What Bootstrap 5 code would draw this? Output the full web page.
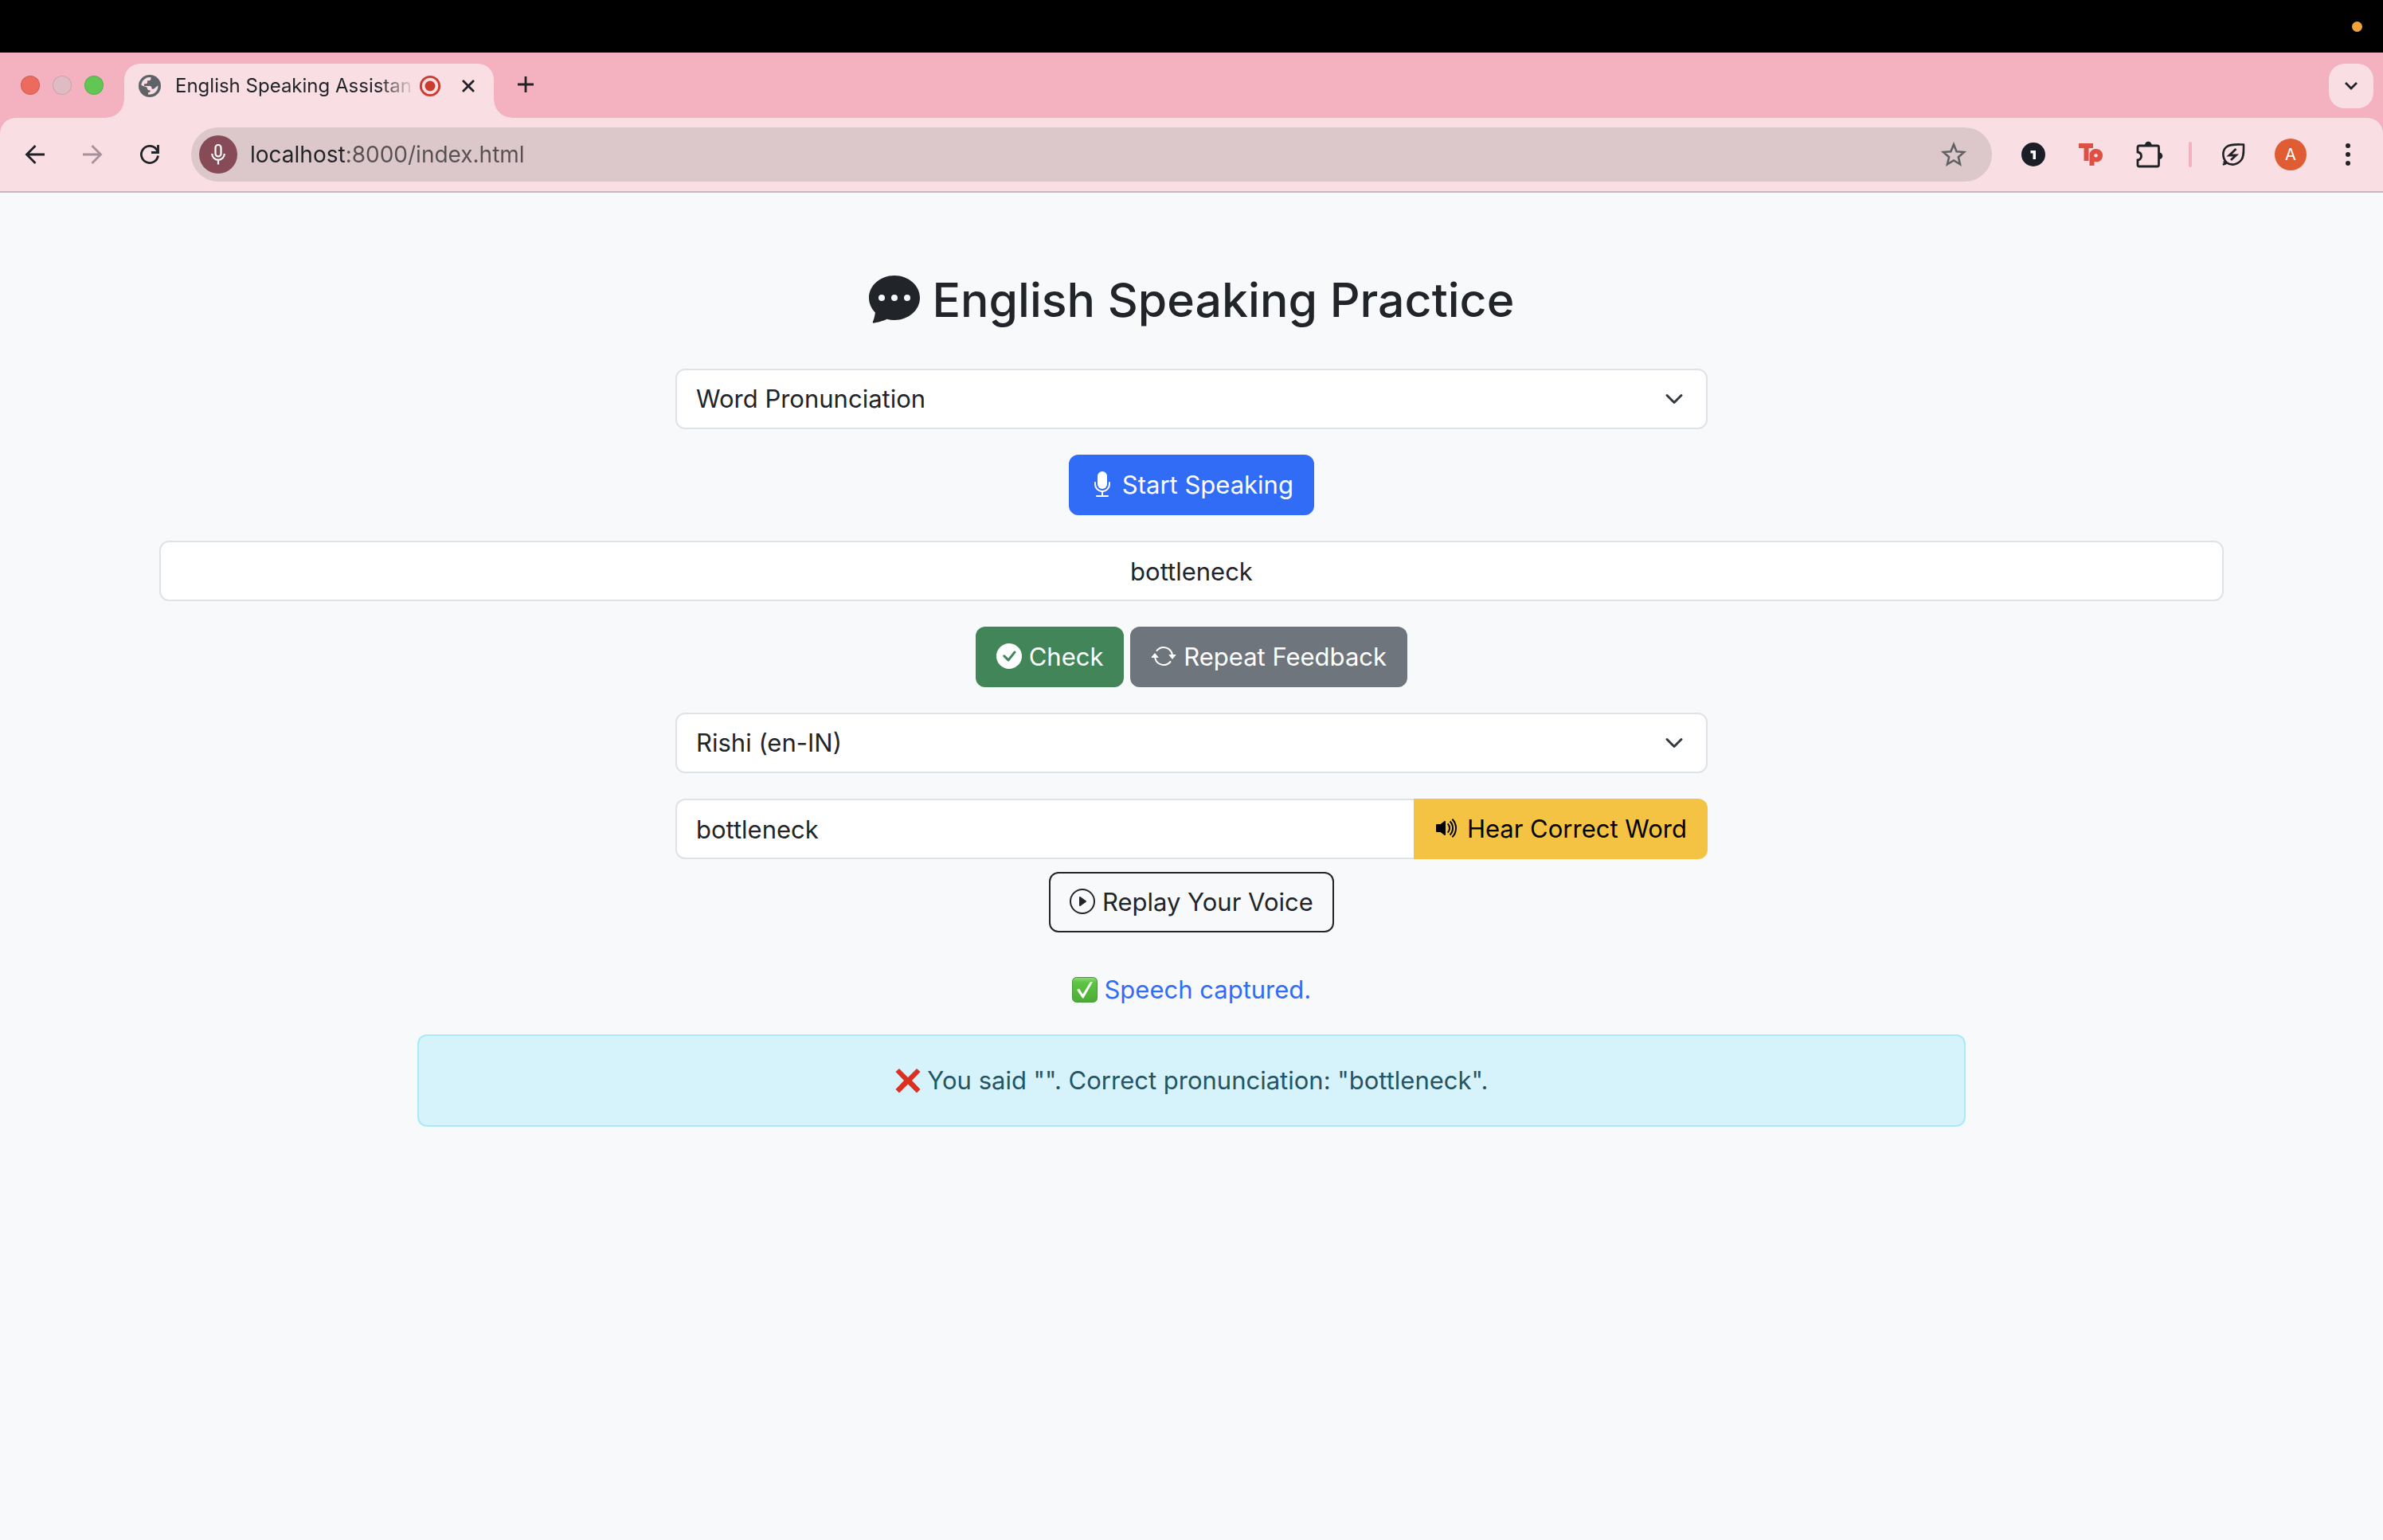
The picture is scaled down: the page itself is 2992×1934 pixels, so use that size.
<!DOCTYPE html>
<html lang="en">
<head>
<meta charset="utf-8">
<meta name="viewport" content="width=device-width, initial-scale=1">
<title>English Speaking Assistant</title>
<link href="https://cdn.jsdelivr.net/npm/bootstrap@5.3.0/dist/css/bootstrap.min.css" rel="stylesheet">
<style>
:root { font-size: 32px; --bs-border-width: 2px; --bs-border-radius: 12px; }
body { font-family: Inter, "Liberation Sans", sans-serif; background: #f8f9fb; color: #212529; font-size: 31px; line-height: 48px; min-height: 100vh; }
svg { display: block; flex: none; overflow: visible; }

/* system bar and browser chrome */
.menubar { height: 66px; background: #000; padding-right: 26px; }
.mic-dot { width: 13px; height: 13px; background: #f1a33c; }
.tabstrip { height: 82px; background: #f4b1bf; padding: 14px 12px 0 26px; }
.lights { gap: 16px; height: 54px; }
.lights span { width: 24px; height: 24px; border: 1px solid rgba(0,0,0,.12); }
.light-close { background: #ec6a5e; }
.light-min { background: #dfbcc4; }
.light-max { background: #62c655; }
.tab-now { position: relative; width: 464px; height: 68px; margin-left: 26px; padding: 0 24px 12px 18px; background: #f9dfe4; border-radius: 20px 20px 0 0; color: #1f2226; font-size: 24px; }
.tab-now::before, .tab-now::after { content: ""; position: absolute; bottom: 0; width: 22px; height: 22px; }
.tab-now::before { right: 100%; background: radial-gradient(circle at 0 0, #f4b1bf 21px, #f9dfe4 22px); }
.tab-now::after { left: 100%; background: radial-gradient(circle at 100% 0, #f4b1bf 21px, #f9dfe4 22px); }
.tab-name { margin: 0 8px 0 18px; -webkit-mask-image: linear-gradient(90deg, #000 86%, transparent 101%); mask-image: linear-gradient(90deg, #000 86%, transparent 101%); }
.tab-close { padding-left: 26px !important; }
.tab-add { height: 52px; margin-left: 30px; }
.bare { border: 0; background: none; padding: 0; color: #1f2226; display: flex; align-items: center; justify-content: center; }
.tab-menu { width: 56px; height: 56px; border-radius: 20px; background: #f9dfe4; }
.under { background: #f4b1bf; }
.toolbar { height: 94px; background: #f9dfe4; border-bottom: 2px solid #c9b4b9; border-radius: 20px 20px 0 0; padding: 0 40px 0 30px; }
.navs { gap: 44px; padding-right: 38px; }
.omnibox { height: 68px; border-radius: 34px; background: #dcc7ca; padding: 0 32px 0 10px; }
.mic-chip { width: 48px; height: 48px; background: #874b58; }
.address { border: 0; outline: 0; padding: 0; margin-left: 16px; min-width: 0; font-size: 28px; line-height: 48px; color: transparent; background: linear-gradient(90deg, #1f2226 122px, #575053 122px); -webkit-background-clip: text; background-clip: text; }
.extras { gap: 42px; margin-left: 37px; }
.extras-end { gap: 37px; margin-left: 32px; }
.sep { width: 4px; height: 32px; background: #f4b1bf; border-radius: 2px; }
.avatar { width: 40px; height: 40px; background: #e05d34; color: #fff; font-size: 20px; line-height: 40px; }
.dots { margin-left: 11px; }

/* practice page */
.practice { max-width: 2640px; padding: 96px 24px 0; }
.practice h2 { font-size: 59px; line-height: 77px; margin-bottom: 48px; }
.practice h2 .ico { width: 64px; height: 64px; vertical-align: -8px; }
.practice .form-select, .practice .form-control, .practice .btn { font-size: 31px; line-height: 48px; padding: 12px 24px; height: 76px; border-width: 2px; border-radius: 12px; }
.practice .form-select, .practice .form-control { border-color: #dfe2e7; color: #212529; }
.practice .form-select { background-size: 32px 24px; background-position: right 24px center; padding-right: 72px; }
.practice .input-group > .form-control { border-top-right-radius: 0; border-bottom-right-radius: 0; }
.practice .input-group > .btn { border-top-left-radius: 0; border-bottom-left-radius: 0; margin-left: -2px; }
.pair { gap: 8px; }
.ico { display: inline-block; fill: currentColor; vertical-align: -4px; }
.practice .btn .ico, .emo { width: 32px; height: 32px; }
.emo { display: inline-block; vertical-align: -5px; }
.btn-primary { --bs-btn-bg: #306cf5; --bs-btn-border-color: #306cf5; }
.btn-success { --bs-btn-bg: #428558; --bs-btn-border-color: #428558; }
.btn-secondary { --bs-btn-bg: #6f757d; --bs-btn-border-color: #6f757d; }
.btn-warning { --bs-btn-bg: #f5c344; --bs-btn-border-color: #f5c344; }
.status { color: #306cf5; }
.result { background: #d6f3fb; border: 2px solid #a9eaf6; color: #235564; padding: 32px; border-radius: 12px; }
</style>
</head>
<body>
<div class="menubar d-flex align-items-center justify-content-end"><span class="mic-dot rounded-circle"></span></div>

<header>
  <div class="tabstrip d-flex align-items-start">
    <div class="lights d-flex align-items-center">
      <span class="light-close rounded-circle"></span>
      <span class="light-min rounded-circle"></span>
      <span class="light-max rounded-circle"></span>
    </div>
    <div class="tab-now d-flex align-items-center">
      <svg width="28" height="28" viewBox="0 0 28 28"><circle cx="14" cy="14" r="14" fill="#5f6368"/><path fill="#f9dfe4" d="M15.500 3.200v1.600c0 1.500-1 2.400-2.500 2.400h-2v2.200c0 1.200-.8 1.800-2 1.800H7v2.900h7c1.500 0 2.500 1 2.500 2.500v1.200h1.300c2.700 0 3.200-2.600 6.700-4.300A10.900 10.900 0 0 1 12 24.700v-2.500c1.900 0 2.900-.9 2.900-2.700-3.400 0-4.200-1.300-4.200-3.700L3.300 13A10.900 10.900 0 0 1 15.500 3.200z"/></svg>
      <span class="tab-name flex-grow-1 text-nowrap">English Speaking Assistan</span>
      <svg width="28" height="28" viewBox="0 0 28 28"><circle cx="14" cy="14" r="11.700" fill="none" stroke="#c93c30" stroke-width="2.800"/><circle cx="14" cy="14" r="6.500" fill="#c93c30"/></svg>
      <button class="bare tab-close" aria-label="Close tab"><svg width="16" height="16" viewBox="0 0 16 16"><path d="M1 1l14 14M15 1L1 15" stroke="#1f2226" stroke-width="2.800"/></svg></button>
    </div>
    <button class="bare tab-add" aria-label="New tab"><svg width="20" height="20" viewBox="0 0 20 20"><path d="M10 0v20M0 10h20" stroke="#1f2226" stroke-width="2.800"/></svg></button>
    <button class="bare tab-menu ms-auto" aria-label="Search tabs"><svg width="16" height="10" viewBox="0 0 16 10"><path d="M1 1l7 7 7-7" fill="none" stroke="#1f2226" stroke-width="2.800"/></svg></button>
  </div>
  <div class="under">
  <div class="toolbar d-flex align-items-center">
    <div class="navs d-flex align-items-center">
      <button class="bare" aria-label="Back"><svg width="28" height="28" viewBox="0 0 28 28"><path d="M26 14H4M14.500 3L3.500 14l11 11" fill="none" stroke="#1f2226" stroke-width="2.800"/></svg></button>
      <button class="bare" aria-label="Forward"><svg width="28" height="28" viewBox="0 0 28 28"><path d="M2 14h22M13.500 3l11 11-11 11" fill="none" stroke="#a6929a" stroke-width="2.800"/></svg></button>
      <button class="bare" aria-label="Reload"><svg width="28" height="28" viewBox="0 0 28 28"><path d="M24.500 15.500A10.600 10.600 0 1 1 22 7l2 3" fill="none" stroke="#1f2226" stroke-width="2.800"/><path d="M24.500 2v9.500H16" fill="none" stroke="#1f2226" stroke-width="2.800"/></svg></button>
    </div>
    <div class="omnibox d-flex align-items-center flex-grow-1">
      <span class="mic-chip rounded-circle d-flex align-items-center justify-content-center"><svg width="18" height="26" viewBox="0 0 18 26"><rect x="5.500" y="1" width="7" height="14.500" rx="3.500" fill="none" stroke="#fff" stroke-width="2.200"/><path d="M1.200 12a7.800 7.800 0 0 0 15.600 0M9 20v5.500" fill="none" stroke="#fff" stroke-width="2.200"/></svg></span>
      <input class="address flex-grow-1" type="text" value="localhost:8000/index.html" aria-label="Address">
      <button class="bare" aria-label="Bookmark"><svg width="32" height="32" viewBox="0 0 32 32"><path d="M16 3.500l3.600 8.700 9.400.8-7.100 6.200 2.100 9.100-8-4.800-8 4.800 2.100-9.100L3 13l9.400-.8z" fill="none" stroke="#5f6264" stroke-width="2.600"/></svg></button>
    </div>
    <div class="extras d-flex align-items-center">
      <svg width="30" height="30" viewBox="0 0 30 30"><circle cx="15" cy="15" r="15" fill="#1b1e27"/><path d="M11.500 10h6.500v11h-3.500v-7.500h-3z" fill="#fff"/></svg>
      <svg width="30" height="30" viewBox="0 0 30 30"><g fill="#de4f44"><path d="M0 1h18v6h-5.500v16h-6V7H0z"/><path fill-rule="evenodd" d="M13.500 14.500C14.500 10.500 17.500 8 21.500 8 26.500 8 30 11.500 30 16s-3 8.500-7.500 8.500c-1 0-2-.2-3-.5v5h-6zM21.500 14a2.300 2.300 0 1 0 .1 0z"/></g></svg>
      <svg width="34" height="34" viewBox="0 0 34 34"><path d="M4 6h22.500a2 2 0 0 1 2 2v22a2 2 0 0 1-2 2H4a2 2 0 0 1-2-2v-6c6-1 6-9 0-10V8a2 2 0 0 1 2-2z" fill="none" stroke="#1f2226" stroke-width="2.800"/><path d="M11 5a4.300 4.300 0 0 1 8.600 0zM29 14.500a4.300 4.300 0 0 1 0 8.600z" fill="#1f2226"/></svg>
    </div>
    <div class="extras-end d-flex align-items-center">
      <span class="sep"></span>
      <svg width="30" height="30" viewBox="0 0 30 30"><path d="M6.500 25C1 19 1 10 6.500 5.500 12 1.500 20 2.500 28 2.500c0 8 .5 15.500-3 19.500-5 6-13 7.500-18.500 3zM6.500 25L2 28M3 23.500l3 4" fill="none" stroke="#1f2226" stroke-width="2.600" stroke-linejoin="round"/><path d="M18.500 8L10 16h8.500L12 22" fill="none" stroke="#1f2226" stroke-width="2.800"/></svg>
      <span class="avatar rounded-circle text-center">A</span>
      <button class="bare dots" aria-label="Menu"><svg width="8" height="30" viewBox="0 0 8 30" fill="#1f2226"><circle cx="4" cy="4" r="3"/><circle cx="4" cy="15" r="3"/><circle cx="4" cy="26" r="3"/></svg></button>
    </div>
  </div>
  </div>
</header>

<main class="container practice text-center">
  <h2><svg class="ico" viewBox="0 0 16 16"><path d="M16 8c0 3.866-3.582 7-8 7a9 9 0 0 1-2.347-.306c-.584.296-1.925.864-4.181 1.234-.2.032-.352-.176-.273-.362.354-.836.674-1.950.770-2.966C.744 11.370 0 9.760 0 8c0-3.866 3.582-7 8-7s8 3.134 8 7M5 8a1 1 0 1 0-2 0 1 1 0 0 0 2 0m4 0a1 1 0 1 0-2 0 1 1 0 0 0 2 0m3 1a1 1 0 1 0 0-2 1 1 0 0 0 0 2"/></svg> English Speaking Practice</h2>

  <select class="form-select w-50 mx-auto mb-3" aria-label="Practice mode"><option>Word Pronunciation</option></select>

  <div class="mb-3 d-flex justify-content-center">
    <button class="btn btn-primary"><svg class="ico" viewBox="0 0 16 16"><path d="M5 3a3 3 0 0 1 6 0v5a3 3 0 0 1-6 0z"/><path d="M3.500 6.500A.5.5 0 0 1 4 7v1a4 4 0 0 0 8 0V7a.5.5 0 0 1 1 0v1a5 5 0 0 1-4.500 4.975V15h3a.5.5 0 0 1 0 1h-7a.5.5 0 0 1 0-1h3v-2.025A5 5 0 0 1 3 8V7a.5.5 0 0 1 .5-.5"/></svg> Start Speaking</button>
  </div>

  <input class="form-control text-center mb-3" type="text" value="bottleneck" aria-label="Recognised speech">

  <div class="pair mb-3 d-flex justify-content-center">
    <button class="btn btn-success"><svg class="ico" viewBox="0 0 16 16"><path d="M16 8A8 8 0 1 1 0 8a8 8 0 0 1 16 0m-3.970-3.030a.75.75 0 0 0-1.080.022L7.477 9.417 5.384 7.323a.75.75 0 0 0-1.060 1.060L6.970 11.030a.75.75 0 0 0 1.079-.02l3.992-4.990a.75.75 0 0 0-.010-1.050z"/></svg> Check</button>
    <button class="btn btn-secondary"><svg class="ico" viewBox="0 0 16 16"><path d="M11.534 7h3.932a.25.25 0 0 1 .192.410l-1.966 2.360a.25.25 0 0 1-.384 0l-1.966-2.360a.25.25 0 0 1 .192-.410m-11 2h3.932a.25.25 0 0 0 .192-.410L2.692 6.230a.25.25 0 0 0-.384 0L.342 8.590A.25.25 0 0 0 .534 9"/><path d="M8 3c-1.552 0-2.940.707-3.857 1.818a.5.5 0 1 1-.771-.636A6.002 6.002 0 0 1 13.917 7H12.900A5 5 0 0 0 8 3M3.100 9a5.002 5.002 0 0 0 8.757 2.182.5.5 0 1 1 .771.636A6.002 6.002 0 0 1 2.083 9z"/></svg> Repeat Feedback</button>
  </div>

  <select class="form-select w-50 mx-auto mb-3" aria-label="Voice"><option>Rishi (en-IN)</option></select>

  <div class="input-group w-50 mx-auto">
    <input class="form-control" type="text" value="bottleneck" aria-label="Word to hear">
    <button class="btn btn-warning"><svg class="ico" viewBox="0 0 16 16"><path d="M11.536 14.010A8.470 8.470 0 0 0 14.026 8a8.470 8.470 0 0 0-2.490-6.010l-.708.707A7.480 7.480 0 0 1 13.025 8c0 2.071-.840 3.946-2.197 5.303z"/><path d="M10.121 12.596A6.480 6.480 0 0 0 12.025 8a6.480 6.480 0 0 0-1.904-4.596l-.707.707A5.480 5.480 0 0 1 11.025 8a5.480 5.480 0 0 1-1.610 3.890z"/><path d="M8.707 11.182A4.500 4.500 0 0 0 10.025 8a4.500 4.500 0 0 0-1.318-3.182L8 5.525A3.500 3.500 0 0 1 9.025 8 3.500 3.500 0 0 1 8 10.475zM6.717 3.550A.5.5 0 0 1 7 4v8a.5.5 0 0 1-.812.390L3.825 10.500H1.500A.5.5 0 0 1 1 10V6a.5.5 0 0 1 .5-.5h2.325l2.363-1.890a.5.5 0 0 1 .529-.060"/></svg> Hear Correct Word</button>
  </div>

  <div class="mt-2 d-flex justify-content-center">
    <button class="btn btn-outline-dark"><svg class="ico" viewBox="0 0 16 16"><path d="M8 15A7 7 0 1 1 8 1a7 7 0 0 1 0 14m0 1A8 8 0 1 0 8 0a8 8 0 0 0 0 16"/><path d="M6.271 5.055a.5.5 0 0 1 .520.038l3.500 2.500a.5.5 0 0 1 0 .814l-3.500 2.500A.5.5 0 0 1 6 10.500v-5a.5.5 0 0 1 .271-.445"/></svg> Replay Your Voice</button>
  </div>

  <p class="status mt-4 mb-3"><svg class="emo" viewBox="0 0 32 32"><defs><linearGradient id="g" x2="0" y2="1"><stop offset="0" stop-color="#8fdc78"/><stop offset=".2" stop-color="#5cc544"/><stop offset="1" stop-color="#4dab34"/></linearGradient></defs><rect x=".5" y=".5" width="31" height="31" rx="5" fill="url(#g)" stroke="#46973a"/><path d="M6 16l3-1.500 4.500 7L23 6h3L14.500 26.500H13z" fill="#fff"/></svg> Speech captured.</p>

  <div class="result w-75 mx-auto"><svg class="emo" viewBox="0 0 32 32"><path d="M5 1l11 11L27 1l4.500 4L21 16l10.500 11L27 31.500 16 20.500 5 31.500.500 27 11 16 .500 5z" fill="#dc3022"/></svg> You said "". Correct pronunciation: "bottleneck".</div>
</main>
<script src="https://cdn.jsdelivr.net/npm/bootstrap@5.3.0/dist/js/bootstrap.bundle.min.js"></script>
</body>
</html>
